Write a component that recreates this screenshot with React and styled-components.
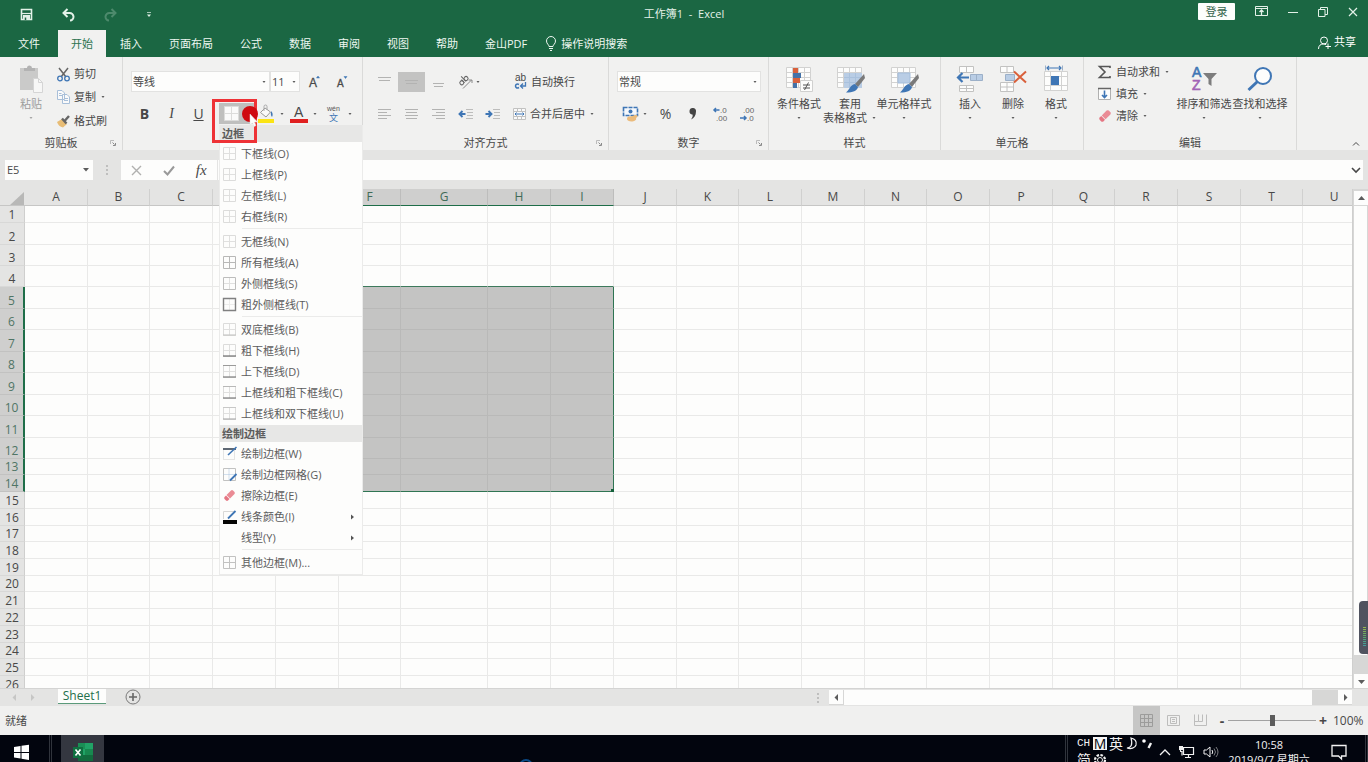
import React, { useState } from "react";
import styled, { createGlobalStyle, css } from "styled-components";

const GREEN = "#1b6743";
const RIBBON = "#f1f1f0";
const CHROME = "#e4e4e3";
const BLUE = "#3f76b5";

const GlobalStyle = createGlobalStyle`
  * {
    box-sizing: border-box;
  }
  body {
    margin: 0;
    overflow: hidden;
    font-family: "Open Sans", "Noto Sans CJK SC", sans-serif;
    font-size: 11px;
    line-height: 14px;
    color: #484848;
  }
  button, input, select {
    font: inherit;
    color: inherit;
    margin: 0;
    padding: 0;
    border: none;
    border-radius: 0;
    background: transparent;
    outline: none;
  }
  button {
    white-space: nowrap;
  }
  svg {
    display: block;
    flex: none;
    overflow: visible;
  }
  svg text {
    font-family: "Liberation Sans", "Noto Sans CJK SC", sans-serif;
  }
`;

const Window = styled.div`
  display: flex;
  flex-direction: column;
  height: 100vh;
`;

/* ---------- title bar and tabs ---------- */

const TitleBar = styled.header`
  display: grid;
  grid-template-columns: 1fr auto 1fr;
  align-items: center;
  height: 28px;
  background: ${GREEN};
  color: #e3f1e8;
`;

const QuickAccess = styled.div`
  display: flex;
  align-items: center;
  gap: 29px;
  padding-left: 20px;
`;

const Title = styled.div`
  white-space: pre;
`;

const WindowControls = styled.div`
  display: flex;
  justify-content: flex-end;
  align-items: center;
  gap: 20px;
  padding: 0 10px 5px 0;
`;

const LoginButton = styled.button`
  width: 37px;
  height: 17px;
  border-radius: 1px;
  background: #fcfefc;
  color: #35654c;
`;

const TabRow = styled.nav`
  display: flex;
  align-items: flex-end;
  gap: 1px;
  height: 29px;
  padding-left: 5px;
  background: ${GREEN};
  color: #e3f1e8;
`;

const Tab = styled.button`
  height: 27px;
  padding: 0 13px;
  background: ${(props) => (props.$active ? RIBBON : "transparent")};
  color: ${(props) => (props.$active ? "#2d7350" : "#eef7f1")};
`;

const FileTab = styled(Tab)`
  margin-right: 4px;
`;

const SearchTab = styled.button`
  display: flex;
  align-items: center;
  gap: 4px;
  height: 27px;
  margin-left: 4px;
  color: #eef7f1;
`;

const ShareButton = styled.button`
  display: flex;
  align-items: center;
  gap: 3px;
  height: 30px;
  margin-left: auto;
  padding-right: 12px;
  color: #ffffff;
`;

/* ---------- ribbon ---------- */

const Ribbon = styled.section`
  display: grid;
  grid-template-columns: 123px 240px 246px 160px 172px 143px 213px 1fr;
  height: 93px;
  background: ${RIBBON};
`;

const Group = styled.div`
  display: flex;
  flex-direction: column;
  min-width: 0;
  border-right: 1px solid #dadad9;
`;

const GroupBody = styled.div`
  display: flex;
  flex: 1;
  gap: ${(props) => props.$gap || 0}px;
  padding: ${(props) => props.$pad || "0"};
`;

const GroupFooter = styled.div`
  display: grid;
  grid-template-columns: 12px 1fr 12px;
  align-items: center;
  height: 15px;
  text-align: center;
`;

const RibbonEnd = styled.div`
  display: flex;
  justify-content: flex-end;
  align-items: flex-end;
  padding: 0 8px 4px 0;
`;

const Stack = styled.div`
  display: flex;
  flex-direction: column;
  gap: ${(props) => props.$gap || 0}px;
`;

const ToolRow = styled.div`
  display: flex;
  align-items: center;
  height: 21px;
`;

const Spacer = styled.i`
  width: ${(props) => props.$width}px;
`;

const TextTool = styled.button`
  display: flex;
  align-items: center;
  gap: 4px;
  height: ${(props) => props.$height || 22}px;
`;

const Tool = styled.button`
  display: flex;
  align-items: center;
  justify-content: center;
  gap: ${(props) => props.$gap || 0}px;
  width: ${(props) => props.$width || 27}px;
  height: 20px;
  background: ${(props) => (props.$pressed ? "#c3c3c2" : "transparent")};
`;

const Glyph = styled.span`
  font-size: 14px;
  font-weight: ${(props) => (props.$bold ? 700 : 400)};
  font-style: ${(props) => (props.$italic ? "italic" : "normal")};
  font-family: ${(props) => (props.$italic ? '"Liberation Serif", serif' : "inherit")};
  text-decoration: ${(props) => (props.$underline ? "underline" : "none")};
`;

const BigTool = styled.button`
  display: flex;
  flex-direction: column;
  align-items: center;
  width: ${(props) => props.$width}px;
  opacity: ${(props) => (props.$disabled ? 0.5 : 1)};

  > svg:first-child {
    margin-bottom: 4px;
  }
  > svg:last-child {
    margin-top: 5px;
  }
`;

const BigLine = styled.span`
  display: flex;
  align-items: center;
  gap: 4px;
  height: 14px;
`;

const Combo = styled.label`
  display: flex;
  align-items: center;
  width: ${(props) => props.$width}px;
  height: 21px;
  padding: 0 2px 0 1px;
  border: 1px solid #e2e2e1;
  background: #fdfdfc;

  select {
    flex: 1;
    min-width: 0;
    appearance: none;
  }
`;

const MenuAnchor = styled.div`
  position: relative;
  width: 38px;
`;

const BorderButton = styled.button`
  display: flex;
  align-items: center;
  width: 38px;
  height: 21px;
  padding-left: 5px;
  background: #bfbfbe;
`;

const Highlight = styled.div`
  position: absolute;
  top: -4px;
  left: -7px;
  width: 45px;
  height: 44px;
  border: 3px solid #ee3236;
  z-index: 4;
  pointer-events: none;
`;

const Pointer = styled.svg`
  position: absolute;
  top: 2px;
  left: 22px;
  z-index: 5;
  pointer-events: none;
`;

/* ---------- borders menu ---------- */

const Menu = styled.div`
  position: absolute;
  top: 22px;
  left: 0;
  width: 144px;
  z-index: 3;
  border: 1px solid #ebebea;
  border-top: none;
  background: #fdfdfc;
  color: #5c5c5c;
`;

const MenuHeading = styled.div`
  height: 17px;
  padding-left: 2px;
  background: #e7e7e6;
  font-weight: 700;
  line-height: 17px;
`;

const MenuList = styled.ul`
  list-style: none;
  margin: 0;
  padding: 1px 0;
`;

const MenuItem = styled.button`
  display: flex;
  align-items: center;
  gap: 5px;
  width: 100%;
  height: 21px;
  padding: 0 7px 0 3px;

  span {
    flex: 1;
    text-align: left;
  }
`;

const MenuDivider = styled.li`
  height: 4px;
  padding-top: 1px;

  &::after {
    content: "";
    display: block;
    height: 1px;
    margin-left: 22px;
    background: #ebebea;
  }
`;

/* ---------- formula bar ---------- */

const FormulaBar = styled.div`
  display: flex;
  height: 39px;
  padding: 10px 5px 9px;
  background: ${CHROME};
`;

const Box = styled.div`
  display: flex;
  align-items: center;
  height: 20px;
  background: #fdfdfc;
  ${(props) =>
    props.$name &&
    css`
      width: 88px;
      padding: 0 4px 0 2px;
    `}
  ${(props) =>
    props.$actions &&
    css`
      justify-content: space-around;
      width: 96px;
      margin-right: 1px;
    `}
  ${(props) =>
    props.$formula &&
    css`
      flex: 1;
      padding-right: 2px;
    `}

  input {
    flex: 1;
    min-width: 0;
  }
`;

const Dots = styled.div`
  display: flex;
  align-items: center;
  justify-content: center;
  width: 28px;
`;

const Fx = styled.span`
  font: italic 15px/18px "Liberation Serif", serif;
`;

/* ---------- sheet ---------- */

const SheetArea = styled.main`
  display: flex;
  flex: 1;
  min-height: 0;
  background: ${CHROME};
`;

const GridClip = styled.div`
  flex: 1;
  overflow: hidden;
  background: #fdfdfc;
`;

const Grid = styled.table`
  table-layout: fixed;
  width: max-content;
  border-collapse: separate;
  border-spacing: 0;
  font-size: 12px;
  line-height: 14px;
`;

const Row = styled.tr`
  height: ${(props) => props.$height}px;
`;

const ColHead = styled.th`
  padding: 0;
  height: 17px;
  overflow: hidden;
  font-weight: 400;
  line-height: 16px;
  vertical-align: bottom;
  background: ${(props) => (props.$on ? "#cfcfce" : CHROME)};
  color: ${(props) => (props.$on ? "#3f6b57" : "#484848")};
  border-right: 1px solid ${(props) => (props.$on ? "#bdbdbc" : "#d0d0cf")};
  border-bottom: 1px solid ${(props) => (props.$on ? "#1f6e49" : "#c6c6c5")};
`;

const RowHead = styled.th`
  padding: 0;
  font-weight: 400;
  text-align: center;
  vertical-align: bottom;
  background: ${(props) => (props.$on ? "#cfcfce" : CHROME)};
  color: ${(props) => (props.$on ? "#4f7565" : "#484848")};
  border-bottom: 1px solid ${(props) => (props.$on ? "#c2c2c1" : "#d8d8d7")};
  border-right: ${(props) => (props.$on ? "2px solid #1f6e49" : "1px solid #cfcfce")};
`;

const Corner = styled.th`
  padding: 0;
  background: ${CHROME};
  border-bottom: 1px solid #c6c6c5;

  svg {
    margin: 3px 1px 0 10px;
  }
`;

const Cell = styled.td`
  position: relative;
  padding: 0;
  border-right: 1px solid #e9e9e8;
  border-bottom: 1px solid #e9e9e8;
  ${(props) =>
    props.$on &&
    css`
      background: #c4c4c3;
      border-color: #b9b9b8;
    `}
  ${(props) => props.$above && "border-bottom-color: #3d7a5c;"}
  ${(props) => props.$bottom && "border-bottom-color: #2f7553;"}
  ${(props) => props.$right && "border-right-color: #2f7553;"}
`;

const FillHandle = styled.i`
  position: absolute;
  right: -1px;
  bottom: -1px;
  width: 3px;
  height: 3px;
  background: #14603a;
`;

const VScroll = styled.div`
  position: relative;
  display: flex;
  flex-direction: column;
  width: 16px;
  padding: 2px 1px 0;
  border-left: 1px solid #cfcfce;
  background: #d7d7d6;
`;

const ScrollButton = styled.button`
  display: flex;
  align-items: center;
  justify-content: center;
  width: 14px;
  height: 14px;
  background: #fdfdfc;
`;

const VThumb = styled.div`
  flex: 1;
  margin: 1px 0 19px;
  background: #fdfdfc;
`;

const Meter = styled.div`
  position: absolute;
  top: 412px;
  right: 0;
  width: 9px;
  height: 53px;
  padding: 26px 2px 0 4px;
  border-radius: 4px 0 0 4px;
  background: #50535f;

  div {
    height: 20px;
    background: repeating-linear-gradient(transparent 0 1px, #50535f 1px 2px), linear-gradient(#9bb84c, #58a86c, #3f9aa5);
  }
`;

const SheetBar = styled.div`
  display: flex;
  height: 18px;
  padding-left: 11px;
  border-top: 1px solid #d4d4d3;
  background: ${CHROME};
`;

const NavButtons = styled.div`
  display: flex;
  align-items: center;
  gap: 11px;
  width: 47px;
`;

const SheetTab = styled.button`
  height: 15px;
  width: 48px;
  border-bottom: 1px solid #5b9a7a;
  background: #fdfdfc;
  color: #236f4b;
  font-size: 12px;
  line-height: 14px;
`;

const AddSheet = styled.button`
  height: 16px;
  margin-left: 19px;
`;

const HScroll = styled.div`
  display: flex;
  width: 40%;
  height: 15px;
  margin: 1px 16px 0 auto;
  background: #d7d7d6;

  > svg {
    width: 20px;
    height: 15px;
    background: ${CHROME};
  }
`;

const HThumb = styled.div`
  flex: 1;
  margin: 0 26px 0 1px;
  background: #fdfdfc;
`;

const StatusBar = styled.footer`
  display: flex;
  align-items: center;
  height: 29px;
  padding: 0 4px 0 5px;
  background: #f0f0ef;
`;

const ViewButtons = styled.div`
  display: flex;
  height: 100%;
  margin-left: auto;
`;

const ViewButton = styled.button`
  display: flex;
  align-items: center;
  justify-content: center;
  width: 27px;
  background: ${(props) => (props.$active ? "#c6c6c5" : "transparent")};
`;

const ZoomControl = styled.div`
  display: flex;
  align-items: center;
  margin-left: 3px;

  button {
    width: 10px;
    font-size: 14px;
    font-weight: 700;
  }
  input {
    appearance: none;
    width: 88px;
    height: 11px;
    margin: 0 2px 0 1px;
    background: linear-gradient(#a2a2a2, #a2a2a2) center / 100% 1px no-repeat;
  }
  input::-webkit-slider-thumb {
    appearance: none;
    width: 5px;
    height: 11px;
    background: #5c5c5c;
  }
`;

const ZoomText = styled.span`
  width: 31px;
  margin-left: 5px;
  font-size: 12px;
`;

/* ---------- desktop taskbar ---------- */

const Taskbar = styled.div`
  display: flex;
  height: 27px;
  overflow: hidden;
  background: #02050e;
  color: #f2f2f2;
`;

const StartButton = styled.button`
  width: 49px;
  height: 34px;
  padding: 0 14px;
`;

const TaskDivider = styled.i`
  width: 3px;
  border: solid #30343c;
  border-width: 0 1px;
`;

const TaskButton = styled.button`
  width: 43px;
  height: 34px;
  margin-left: 9px;
  padding-left: 11px;
  background: #343740;
`;

const TaskCenter = styled.div`
  display: flex;
  flex: 1;
  align-items: flex-end;
  padding-left: 414px;
`;

const Ime = styled.div`
  display: flex;
  flex-wrap: wrap;
  align-items: center;
  align-content: flex-start;
  gap: 1px 2px;
  width: 78px;
  height: 40px;
  margin-left: 9px;
  padding-top: 1px;
  font-size: 14px;
  line-height: 15px;

  small {
    width: 14px;
    font: 11px/15px "Liberation Mono", monospace;
  }
  b {
    width: 14px;
    height: 13px;
    background: #f5f5f5;
    color: #02050e;
    font-weight: 400;
    line-height: 13px;
    text-align: center;
  }
`;

const Tray = styled.div`
  display: flex;
  align-items: center;
  gap: 8px;
  height: 34px;
  margin-left: 4px;
`;

const Clock = styled.div`
  width: 100px;
  padding-top: 2px;
  line-height: 15px;
  text-align: center;
`;

const NoticeButton = styled.button`
  height: 34px;
  margin: 0 18px 0 12px;
`;

/* ---------- icons ---------- */

const Icon = ({ w = 14, h = 14, children, ...rest }) => (
  <svg width={w} height={h} viewBox={`0 0 ${w} ${h}`} fill="none" stroke="currentColor" aria-hidden="true" {...rest}>
    {children}
  </svg>
);

const Arrow = ({ size = 3 }) => (
  <Icon w={6} h={4}>
    <path d={size > 3 ? "M0 0h6L3 3.5z" : "M1.5 1h3L3 3z"} fill="#5c5c5c" stroke="none" />
  </Icon>
);

const Launcher = () => (
  <Icon w={6} h={6}>
    <path d="M.5 4V.5H4" stroke="#bbb" />
    <path d="M2.5 2.5l2 2M5.5 3v2.5H3" stroke="#8a8a8a" />
  </Icon>
);

const Triangle = ({ dir, color = "#5c5c5c" }) => {
  const shapes = {
    up: "M0 5L3.500 1 7 5z",
    down: "M0 2h7L3.500 6z",
    left: "M5 0v7L1.500 3.500z",
    right: "M2 0v7l3.500-3.500z",
  };
  return (
    <Icon w={7} h={7}>
      <path d={shapes[dir]} fill={color} stroke="none" />
    </Icon>
  );
};

const SaveIcon = () => (
  <Icon w={13} h={13}>
    <path d="M1.500 1.500h10v10h-10z" strokeWidth="1.600" />
    <path d="M3 7h7v5H3z" fill="currentColor" stroke="none" />
    <path d="M2 5.500h9" strokeWidth="1.200" />
    <path d="M5.500 9.500v2.500" stroke={GREEN} strokeWidth="1.500" />
  </Icon>
);

const UndoIcon = ({ flip }) => (
  <Icon w={13} h={13} opacity={flip ? 0.25 : 1}>
    <g transform={flip ? "translate(13 0) scale(-1 1)" : undefined}>
      <path d="M2 5h5.500a3.500 3.500 0 0 1 .5 7.500" strokeWidth="2" />
      <path d="M5.500 1L1.500 5l4 4" strokeWidth="2" />
    </g>
  </Icon>
);

const CustomizeIcon = () => (
  <Icon w={6} h={6}>
    <path d="M1 1.500h4" opacity=".7" />
    <path d="M1 3.500h4L3 6z" fill="currentColor" stroke="none" />
  </Icon>
);

const RibbonModeIcon = () => (
  <Icon w={13} h={11}>
    <path d="M.5.500h12v9H.5zM.5 2.500h12" />
    <path d="M6.500 9V4.500M4.500 6l2-2 2 2" strokeWidth="1.300" />
  </Icon>
);

const MinIcon = () => (
  <Icon w={10} h={10}>
    <path d="M0 5.500h10" />
  </Icon>
);

const RestoreIcon = () => (
  <Icon w={10} h={10}>
    <path d="M.5 2.500h6.500V9.500H.5zM2.500 2.500V.500h7v7H7" />
  </Icon>
);

const CloseIcon = () => (
  <Icon w={10} h={10}>
    <path d="M1 1l8 8M9 1L1 9" strokeWidth="1.200" />
  </Icon>
);

const BulbIcon = () => (
  <Icon w={12} h={15}>
    <path d="M4 10.500C4 8.500 1.500 8 1.500 5a4.500 4.500 0 0 1 9 0c0 3-2.500 3.500-2.500 5.500zM4 12.500h4M5 14.500h2" />
  </Icon>
);

const ShareIcon = () => (
  <Icon w={13} h={13}>
    <circle cx="6" cy="4.500" r="3.500" />
    <path d="M.5 13c0-3.500 2-5 5-5 1.200 0 2 .3 2.700.8M10 7.500v5.500M7.500 10.500h5.500" />
  </Icon>
);

const PasteIcon = () => (
  <Icon w={26} h={28}>
    <path d="M2 3h18v22H2z" fill="#a5a5a4" stroke="none" />
    <path d="M6 3h3a2.500 2.500 0 0 1 5 0h3v3H6z" fill="#777" stroke="none" />
    <path d="M15.500 13.500h5l4 4v10h-9z" fill="#fdfdfc" stroke="#bbb" />
    <path d="M20.500 13.500v4h4" stroke="#bbb" />
  </Icon>
);

const CutIcon = () => (
  <Icon w={13} h={15}>
    <path d="M2 1l7 9M11 1L4 10" stroke="#666" strokeWidth="1.500" />
    <circle cx="3" cy="11.500" r="2.300" stroke={BLUE} strokeWidth="1.300" />
    <circle cx="10" cy="11.500" r="2.300" stroke={BLUE} strokeWidth="1.300" />
  </Icon>
);

const CopyIcon = () => (
  <Icon w={13} h={14}>
    <path d="M.5.500H5L7.500 3v6.500h-7zM5.500 4.500H10l2.500 2.500v6.500h-7z" fill="#fafafa" stroke="#a8bfd9" />
    <path d="M2 3.500h2.500M2 5.500h3M7 8.500h4M7 10.500h4" stroke="#a8bfd9" />
  </Icon>
);

const BrushIcon = () => (
  <Icon w={13} h={13}>
    <path d="M0 7l5-3 5 5-4 3.500C3 12 1 10 0 7z" fill="#e8bd76" stroke="none" />
    <path d="M5 3.500l4.500 5M8 5.500L12 1" stroke="#666" strokeWidth="2.400" />
  </Icon>
);

const Lines = ({ rows, w = 13 }) => (
  <Icon w={w} h={14}>
    {rows.map(([x, y, len]) => (
      <path key={y} d={`M${x} ${y}.5h${len}`} stroke="#b3b3b2" />
    ))}
  </Icon>
);

const OrientIcon = () => (
  <Icon w={14} h={14}>
    <g transform="rotate(-45 6 6)" stroke="#666">
      <circle cx="2.500" cy="5" r="2" />
      <path d="M4.500 2.500v4.500M6.500 0v7" />
      <circle cx="8.500" cy="5" r="2" />
    </g>
    <path d="M4 13.500L12.500 5M9.500 5h3.500v3" stroke="#888" />
  </Icon>
);

const WrapIcon = () => (
  <Icon w={13} h={16}>
    <text x="1" y="7" fontSize="10" fill="#484848" stroke="none">ab</text>
    <path d="M5 10.500C2.500 9 1.500 11 1.500 12s1 3 3.500 1.500" stroke={BLUE} strokeWidth="1.500" />
    <path d="M11.500 8v4H7M9 9.500L6.500 12 9 14.500" stroke={BLUE} strokeWidth="1.300" />
  </Icon>
);

const IndentIcon = ({ right }) => (
  <Icon w={16} h={14}>
    <path d="M8 2.500h7M9 5.500h6M9 8.500h6M8 11.500h7" stroke="#bdbdbc" />
    <g transform={right ? "translate(8 0) scale(-1 1)" : undefined}>
      <path d="M7.500 7H1.500M4.500 4L1.500 7l3 3" stroke={BLUE} strokeWidth="1.900" />
    </g>
  </Icon>
);

const MergeIcon = () => (
  <Icon w={13} h={14}>
    <path d="M.5 1.500h12v11H.5zM.5 4.500h12M.5 9.500h12M4.500 1.500v3M8.500 1.500v3M4.500 9.500v3M8.500 9.500v3" fill="#fafafa" stroke="#c2c2c1" />
    <path d="M2 7h9M3.500 5.500L2 7l1.500 1.500M9.500 5.500L11 7 9.500 8.500" stroke={BLUE} />
  </Icon>
);

const GrowIcon = ({ shrink }) => (
  <Icon w={14} h={14}>
    <text x="1" y="12" fontSize={shrink ? 10 : 12} fill="#4a4a4a" stroke="#4a4a4a" strokeWidth=".3">A</text>
    <path d={shrink ? "M8 1.500h3l-1.500 2z" : "M8.500 3h3L10 1z"} fill={BLUE} stroke={BLUE} strokeWidth=".5" />
  </Icon>
);

const TableGlyph = () => (
  <Icon w={15} h={15}>
    <path d="M.5.500h14v14H.5zM7.500.500v14M.5 7.500h14" fill="#fafafa" stroke="#dcdcdb" />
  </Icon>
);

const BucketIcon = () => (
  <Icon w={16} h={20}>
    <path d="M2.500 8.500L7 4l5.500 4L8 13z" fill="#fafafa" stroke="#999" />
    <path d="M6 7V2.500a1.500 1.500 0 0 1 3 0V6" stroke="#aaa" />
    <path d="M13 7c2 2 2 4 1 6-1-1-1.500-3-1-6z" fill={BLUE} stroke="none" />
    <path d="M0 15h16v4H0z" fill="#fbe414" stroke="none" />
  </Icon>
);

const FontColorIcon = () => (
  <Icon w={18} h={20}>
    <text x="4" y="13" fontSize="14" fill="#484848" stroke="none">A</text>
    <path d="M0 15h18v4H0z" fill="#e02020" stroke="none" />
  </Icon>
);

const PhoneticIcon = () => (
  <Icon w={14} h={16}>
    <text x="0" y="5" fontSize="7" fill="#555" stroke="none">wén</text>
    <text x="2" y="15" fontSize="9" fill={BLUE} stroke="none">文</text>
  </Icon>
);

const MoneyIcon = () => (
  <Icon w={17} h={16}>
    <path d="M1.500 1.500h14v8h-14z" fill="#f5f8fc" stroke={BLUE} strokeWidth="1.600" strokeDasharray="4 1" />
    <circle cx="8.500" cy="5.500" r="2" fill={BLUE} stroke="none" />
    <path d="M5 13c0-2 1-2.500 3-2.500s4-1.500 6-1.500 2 2 0 3c1 2-2 3.500-4.500 3.500S5 14.500 5 13z" fill="#ebbb7c" stroke="none" />
  </Icon>
);

const DecimalIcon = ({ more }) => (
  <Icon w={14} h={16}>
    <text x={more ? 7 : 3} y="7" fontSize="8" fill="#666" stroke="none">{more ? ".0" : ".00"}</text>
    <text x={more ? 3 : 7} y="15" fontSize="8" fill="#666" stroke="none">{more ? ".00" : ".0"}</text>
    <path d={more ? "M6.500 4H1M3 2L1 4l2 2" : "M0 12h6M4 10l2 2-2 2"} stroke={BLUE} strokeWidth="1.500" />
  </Icon>
);

const CellGrid = ({ children }) => (
  <Icon w={29} h={28}>
    <path d="M1.500 2.500h24v20h-24zM1.500 7.500h24M1.500 12.500h24M1.500 17.500h24M7.500 2.500v20M13.500 2.500v20M19.500 2.500v20" fill="#fdfdfc" stroke="#d2d2d1" />
    {children}
  </Icon>
);

const ConditionalIcon = () => (
  <CellGrid>
    <path d="M8 3h5v5H8zM8 13h7v5H8z" fill="#d9603b" stroke="none" />
    <path d="M8 8h8v5H8zM8 18h4v5H8z" fill="#4472a8" stroke="none" />
    <path d="M15.500 15.500h12v11h-12z" fill="#fdfdfc" stroke="#d0d0cf" />
    <path d="M18 20h7M18 23h7M23.500 17.500l-4 7.500" stroke="#555" />
  </CellGrid>
);

const Paintbrush = () => (
  <>
    <path d="M28 9l1 4-7 9-3-3z" fill="#7a7a7a" stroke="none" />
    <path d="M19 19l3 3c-1 4-5 5.500-12 5.500 3-2 4-7.500 9-8.500z" fill={BLUE} stroke="none" />
  </>
);

const TableStyleIcon = () => (
  <CellGrid>
    <path d="M8 8h18v15H8z" fill="#b9cde5" stroke="none" />
    <path d="M8 12.500h18M8 17.500h18M13.500 8v15M19.500 8v15" stroke="#a9c1dd" />
    <Paintbrush />
  </CellGrid>
);

const CellStyleIcon = () => (
  <CellGrid>
    <path d="M8 8h12v10H8z" fill="#b9cde5" stroke="#a3bddb" />
    <Paintbrush />
  </CellGrid>
);

const InsertIcon = () => (
  <Icon w={28} h={28}>
    <path d="M3.500 1.500h14v6h-14zM10.500 1.500v6M3.500 20.500h14v6h-14zM10.500 20.500v6M3.500 23.500h14" fill="#fdfdfc" stroke="#c2c2c1" />
    <path d="M14.500 9.500h12v6h-12zM20.500 9.500v6" fill="#b9cde5" stroke="#9cb0c8" />
    <path d="M13 12.500H2M6.500 8L2 12.500 6.500 17" stroke={BLUE} strokeWidth="2.200" />
  </Icon>
);

const DeleteIcon = () => (
  <Icon w={28} h={28}>
    <path d="M1.500 1.500h13v6h-13zM8 1.500v6M1.500 17.500h13v9h-13zM8 17.500v9M1.500 22h13" fill="#fdfdfc" stroke="#c2c2c1" />
    <path d="M6.500 9.500h9v6h-9z" fill="#b9cde5" stroke="#9cb0c8" />
    <path d="M15 6.500l12 11M27 6.500l-12 11" stroke="#d9603b" strokeWidth="2" />
  </Icon>
);

const FormatIcon = () => (
  <Icon w={26} h={28}>
    <path d="M2.500.500v5M19.500.500v5" stroke="#9cb0c8" />
    <path d="M4 3h14M6 1L4 3l2 2M16 1l2 2-2 2" stroke={BLUE} strokeWidth="1.200" />
    <path d="M1.500 6.500h23v19h-23zM1.500 11.500h23M1.500 20.500h23M7.500 6.500v19M18.500 6.500v19" fill="#fdfdfc" stroke="#d2d2d1" />
    <path d="M8 11h8v9H8z" fill={BLUE} stroke="none" />
  </Icon>
);

const SumIcon = () => (
  <Icon w={14} h={14}>
    <path d="M12 3V1.500H1.500L7 7l-5.500 5.500H12V11" stroke="#555" strokeWidth="1.600" />
  </Icon>
);

const FillIcon = () => (
  <Icon w={14} h={14}>
    <path d="M.5 1.500h12v11H.5z" fill="#fdfdfc" stroke="#b0b0b0" />
    <path d="M0 1.500h13" stroke="#666" strokeWidth="1.500" />
    <path d="M6.500 3.500V10.500M4 8l2.500 2.500L9 8" stroke={BLUE} strokeWidth="1.600" />
  </Icon>
);

const EraserIcon = ({ size = 13 }) => (
  <svg width={size} height={size} viewBox="0 0 13 13" aria-hidden="true">
    <path d="M8 1.500q1-.8 2 0l1.500 1.500q.8 1 0 2L7 9.500 3.500 6z" fill="#ea8b95" />
    <path d="M3 6.500L6.500 10 5 11.500q-1 .8-2 0L1.500 10q-.8-1 0-2z" fill="#e57683" />
  </svg>
);

const SortIcon = () => (
  <Icon w={26} h={28}>
    <text x="1" y="12" fontSize="14" fill={BLUE} stroke={BLUE} strokeWidth=".6">A</text>
    <text x="1" y="25" fontSize="14" fill="#a163b5" stroke="#a163b5" strokeWidth=".6">Z</text>
    <path d="M12 8h14l-5.500 6v7l-3-2v-5z" fill="#7d7d7d" stroke="none" />
  </Icon>
);

const FindIcon = () => (
  <Icon w={26} h={28}>
    <circle cx="16" cy="11" r="8" fill="#fdfdfc" stroke={BLUE} strokeWidth="2" />
    <path d="M10.500 16.500L1.500 25" stroke={BLUE} strokeWidth="3" />
  </Icon>
);

const EdgeIcon = ({ inner = "#e0e0df", box = "#dcdcdb", top, bottom, thick }) => (
  <Icon w={13} h={13}>
    <path d="M6.500 1v11M1 6.500h11" stroke={inner} />
    <path d="M.5.500h12v12H.5z" stroke={box} strokeWidth={thick ? 1.4 : 1} />
    {top && <path d="M0 .5h13" stroke={top} />}
    {bottom && <path d="M0 12h13" stroke={bottom} strokeWidth="1.200" />}
  </Icon>
);

const DrawIcon = () => (
  <Icon w={13} h={13}>
    <path d="M.5 1.500h11v11H.5z" stroke="#ccc" strokeDasharray="1 1" />
    <path d="M0 2h13" stroke="#5f6874" strokeWidth="2" />
    <path d="M13.500 0L5 8" stroke={BLUE} strokeWidth="1.600" />
  </Icon>
);

const DrawGridIcon = () => (
  <Icon w={13} h={13}>
    <path d="M.5.500h12v12H.5z" stroke="#c2c2c1" />
    <path d="M6 .5v12M.5 6.500h12" stroke="#a9c2df" strokeDasharray="1 1" />
    <path d="M13.500 6L7 12.500" stroke={BLUE} strokeWidth="1.800" />
  </Icon>
);

const LineColorIcon = () => (
  <Icon w={13} h={14}>
    <path d="M.5 9V1.500h12" stroke="#d8d8d7" />
    <path d="M12.500 1L5 8.500" stroke={BLUE} strokeWidth="1.800" />
    <path d="M0 10h14v4H0z" fill="#050505" stroke="none" />
  </Icon>
);

/* ---------- data ---------- */

const TABS = ["开始", "插入", "页面布局", "公式", "数据", "审阅", "视图", "帮助", "金山PDF"];

const BORDER_GROUPS = [
  [
    ["下框线(O)", <EdgeIcon />],
    ["上框线(P)", <EdgeIcon />],
    ["左框线(L)", <EdgeIcon />],
    ["右框线(R)", <EdgeIcon />],
  ],
  [
    ["无框线(N)", <EdgeIcon />],
    ["所有框线(A)", <EdgeIcon inner="#b8b8b7" box="#b8b8b7" />],
    ["外侧框线(S)", <EdgeIcon box="#bdbdbc" />],
    ["粗外侧框线(T)", <EdgeIcon inner="#ececeb" box="#808080" thick />],
  ],
  [
    ["双底框线(B)", <EdgeIcon bottom="#c8c8c7" />],
    ["粗下框线(H)", <EdgeIcon bottom="#6e6e6e" />],
    ["上下框线(D)", <EdgeIcon top="#9a9a99" bottom="#7c7c7c" />],
    ["上框线和粗下框线(C)", <EdgeIcon top="#b8b8b7" bottom="#7c7c7c" />],
    ["上框线和双下框线(U)", <EdgeIcon top="#c8c8c7" bottom="#b0b0af" />],
  ],
];

const DRAW_GROUPS = [
  [
    ["绘制边框(W)", <DrawIcon />],
    ["绘制边框网格(G)", <DrawGridIcon />],
    ["擦除边框(E)", <EraserIcon />],
    ["线条颜色(I)", <LineColorIcon />, true],
    ["线型(Y)", <Icon w={13} h={13} />, true],
  ],
  [["其他边框(M)...", <EdgeIcon inner="#c2c2c1" box="#c2c2c1" />]],
];

const COLUMNS = [63, 62, 63, 63, 63, 62, 87, 63, 63, 63, 62, 63, 63, 62, 63, 63, 62, 63, 63, 62, 63].map(
  (width, i) => ({ width, name: String.fromCharCode(65 + i), on: i >= 4 && i <= 8 })
);

const ROW_HEIGHTS = [
  17, 22, 21, 21, 22, 21, 22, 21, 22, 21, 22, 21, 16, 17, 17, 17, 16, 17, 17, 16, 17, 17, 17, 16, 17, 17,
];

const inRows = (r) => r >= 5 && r <= 14;

/* ---------- parts ---------- */

function MenuSection({ groups }) {
  return (
    <MenuList role="menu">
      {groups.map((items, g) => (
        <React.Fragment key={g}>
          {g > 0 && <MenuDivider role="separator" />}
          {items.map(([label, icon, more]) => (
            <li key={label}>
              <MenuItem role="menuitem">
                {icon}
                <span>{label}</span>
                {more && (
                  <Icon w={4} h={6}>
                    <path d="M0 .5v5L3 3z" fill="#555" stroke="none" />
                  </Icon>
                )}
              </MenuItem>
            </li>
          ))}
        </React.Fragment>
      ))}
    </MenuList>
  );
}

function RibbonGroup({ label, launcher, gap, pad, children }) {
  return (
    <Group>
      <GroupBody $gap={gap} $pad={pad}>
        {children}
      </GroupBody>
      <GroupFooter>
        <i />
        <span>{label}</span>
        {launcher && <Launcher />}
      </GroupFooter>
    </Group>
  );
}

function Select({ label, value, width }) {
  return (
    <Combo $width={width}>
      <select aria-label={label} defaultValue={value}>
        <option>{value}</option>
      </select>
      <Arrow />
    </Combo>
  );
}

function BigButton({ icon, lines, width, disabled, inlineArrow }) {
  return (
    <BigTool $width={width} $disabled={disabled}>
      {icon}
      {lines.map((line, i) => (
        <BigLine key={line}>
          {line}
          {inlineArrow && i === lines.length - 1 && <Arrow />}
        </BigLine>
      ))}
      {!inlineArrow && <Arrow />}
    </BigTool>
  );
}

function BordersDropdown() {
  const [open, setOpen] = useState(true);
  return (
    <MenuAnchor>
      <BorderButton aria-label="边框" aria-expanded={open} onClick={() => setOpen(!open)}>
        <TableGlyph />
      </BorderButton>
      {open && (
        <Menu>
          <MenuHeading>边框</MenuHeading>
          <MenuSection groups={BORDER_GROUPS} />
          <MenuHeading>绘制边框</MenuHeading>
          <MenuSection groups={DRAW_GROUPS} />
        </Menu>
      )}
      <Highlight />
      <Pointer width="20" height="24" viewBox="0 0 20 24" aria-hidden="true">
        <circle cx="9" cy="9" r="8" fill="#cf0a10" />
        <path d="M9 9v11l2.500-2 1.500 3.500 2-1-1.500-3.500h3z" fill="#fdfdfc" stroke="#ddd" strokeWidth=".5" />
      </Pointer>
    </MenuAnchor>
  );
}

function RibbonPanel() {
  return (
    <Ribbon>
      <RibbonGroup label="剪贴板" launcher gap={11} pad="8px 0 0 16px">
        <BigButton icon={<PasteIcon />} lines={["粘贴"]} width={30} disabled />
        <Stack $gap={1}>
          <TextTool $height={18}>
            <CutIcon />
            剪切
          </TextTool>
          <TextTool $height={25}>
            <CopyIcon />
            复制
            <Arrow />
          </TextTool>
          <TextTool>
            <BrushIcon />
            格式刷
          </TextTool>
        </Stack>
      </RibbonGroup>

      <RibbonGroup label="字体" pad="14px 0 0 8px">
        <Stack $gap={11}>
          <ToolRow>
            <Select label="字体" value="等线" width={139} />
            <Select label="字号" value="11" width={30} />
            <Tool $width={29} aria-label="增大字号">
              <GrowIcon />
            </Tool>
            <Tool aria-label="减小字号">
              <GrowIcon shrink />
            </Tool>
          </ToolRow>
          <ToolRow>
            <Tool aria-label="加粗">
              <Glyph $bold>B</Glyph>
            </Tool>
            <Tool aria-label="倾斜">
              <Glyph $italic>I</Glyph>
            </Tool>
            <Tool aria-label="下划线">
              <Glyph $underline>U</Glyph>
            </Tool>
            <Spacer $width={7} />
            <BordersDropdown />
            <Tool $width={28} $gap={5} aria-label="填充颜色">
              <BucketIcon />
              <Arrow />
            </Tool>
            <Tool $width={38} $gap={4} aria-label="字体颜色">
              <FontColorIcon />
              <Arrow />
            </Tool>
            <Tool $width={33} $gap={6} aria-label="拼音">
              <PhoneticIcon />
              <Arrow />
            </Tool>
          </ToolRow>
        </Stack>
      </RibbonGroup>

      <RibbonGroup label="对齐方式" launcher pad="14px 0 0 8px">
        <Stack $gap={11}>
          <ToolRow>
            <Tool aria-label="顶端对齐">
              <Lines rows={[[0, 2, 13], [1, 5, 11]]} />
            </Tool>
            <Tool $pressed aria-label="垂直居中">
              <Lines rows={[[0, 5, 13], [1, 8, 11]]} />
            </Tool>
            <Tool aria-label="底端对齐">
              <Lines rows={[[1, 8, 11], [2, 11, 9]]} />
            </Tool>
            <Tool $width={36} $gap={2} aria-label="方向">
              <OrientIcon />
              <Arrow />
            </Tool>
            <Spacer $width={26} />
            <TextTool>
              <WrapIcon />
              自动换行
            </TextTool>
          </ToolRow>
          <ToolRow>
            <Tool aria-label="左对齐">
              <Lines rows={[[0, 2, 13], [0, 5, 9], [0, 8, 13], [0, 11, 9]]} />
            </Tool>
            <Tool aria-label="居中">
              <Lines rows={[[0, 2, 13], [1, 5, 11], [0, 8, 13], [1, 11, 11]]} />
            </Tool>
            <Tool aria-label="右对齐">
              <Lines rows={[[0, 2, 13], [4, 5, 9], [0, 8, 13], [4, 11, 9]]} />
            </Tool>
            <Tool aria-label="减少缩进量">
              <IndentIcon />
            </Tool>
            <Tool aria-label="增加缩进量">
              <IndentIcon right />
            </Tool>
            <Spacer $width={7} />
            <TextTool>
              <MergeIcon />
              合并后居中
              <Arrow />
            </TextTool>
          </ToolRow>
        </Stack>
      </RibbonGroup>

      <RibbonGroup label="数字" launcher pad="14px 0 0 8px">
        <Stack $gap={11}>
          <ToolRow>
            <Select label="数字格式" value="常规" width={144} />
          </ToolRow>
          <ToolRow>
            <Tool $width={35} $gap={3} aria-label="会计数字格式">
              <MoneyIcon />
              <Arrow />
            </Tool>
            <Tool aria-label="百分比样式">
              <Glyph>%</Glyph>
            </Tool>
            <Tool aria-label="千位分隔样式">
              <Icon w={8} h={14}>
                <path d="M4 1a3 3 0 0 1 3 3.500c0 4-2 6.500-5 8 1.500-2 2-3.500 1.500-5A3 3 0 1 1 4 1z" fill="#444" stroke="none" />
              </Icon>
            </Tool>
            <Tool aria-label="增加小数位数">
              <DecimalIcon more />
            </Tool>
            <Tool aria-label="减少小数位数">
              <DecimalIcon />
            </Tool>
          </ToolRow>
        </Stack>
      </RibbonGroup>

      <RibbonGroup label="样式" pad="8px 0 0 4px">
        <BigButton icon={<ConditionalIcon />} lines={["条件格式"]} width={52} />
        <BigButton icon={<TableStyleIcon />} lines={["套用", "表格格式"]} width={50} inlineArrow />
        <BigButton icon={<CellStyleIcon />} lines={["单元格样式"]} width={58} />
      </RibbonGroup>

      <RibbonGroup label="单元格" pad="8px 0 0 8px">
        <BigButton icon={<InsertIcon />} lines={["插入"]} width={42} />
        <BigButton icon={<DeleteIcon />} lines={["删除"]} width={44} />
        <BigButton icon={<FormatIcon />} lines={["格式"]} width={42} />
      </RibbonGroup>

      <RibbonGroup label="编辑" pad="4px 0 0 14px">
        <Stack>
          <TextTool>
            <SumIcon />
            自动求和
            <Arrow />
          </TextTool>
          <TextTool>
            <FillIcon />
            填充
            <Arrow />
          </TextTool>
          <TextTool>
            <EraserIcon size={14} />
            清除
            <Arrow />
          </TextTool>
        </Stack>
        <GroupBody $pad="4px 0 0 6px">
          <BigButton icon={<SortIcon />} lines={["排序和筛选"]} width={56} />
          <BigButton icon={<FindIcon />} lines={["查找和选择"]} width={56} />
        </GroupBody>
      </RibbonGroup>

      <RibbonEnd>
        <button aria-label="折叠功能区">
          <Icon w={8} h={5}>
            <path d="M1 4.500l3-3 3 3" />
          </Icon>
        </button>
      </RibbonEnd>
    </Ribbon>
  );
}

function Sheet() {
  return (
    <Grid>
      <colgroup>
        <col width={25} />
        {COLUMNS.map((c) => (
          <col key={c.name} width={c.width} />
        ))}
      </colgroup>
      <thead>
        <tr>
          <Corner>
            <Icon w={14} h={13}>
              <path d="M14 0v13H0z" fill="#b8b8b7" stroke="none" />
            </Icon>
          </Corner>
          {COLUMNS.map((c) => (
            <ColHead key={c.name} $on={c.on}>
              {c.name}
            </ColHead>
          ))}
        </tr>
      </thead>
      <tbody>
        {ROW_HEIGHTS.map((height, i) => {
          const r = i + 1;
          return (
            <Row key={r} $height={height}>
              <RowHead $on={inRows(r)}>{r}</RowHead>
              {COLUMNS.map((c) => (
                <Cell
                  key={c.name}
                  $on={c.on && inRows(r)}
                  $above={c.on && r === 4}
                  $bottom={c.on && r === 14}
                  $right={c.name === "I" && inRows(r)}
                >
                  {c.name === "I" && r === 14 && <FillHandle />}
                </Cell>
              ))}
            </Row>
          );
        })}
      </tbody>
    </Grid>
  );
}

function DesktopTaskbar() {
  return (
    <Taskbar>
      <StartButton aria-label="开始菜单">
        <Icon w={16} h={16}>
          <path d="M0 3l6.500-1v6H0zM7.500 1.800L15 .700V8H7.500zM0 9h6.500v5.500L0 13.500zM7.500 9H15v7l-7.500-1.200z" fill="#fff" stroke="none" />
        </Icon>
      </StartButton>
      <TaskDivider />
      <TaskButton aria-label="Excel">
        <Icon w={22} h={20}>
          <path d="M6 1h15v18H6z" fill="#21a366" stroke="none" />
          <path d="M6 1h7v6H6z" fill="#1a8f55" stroke="none" />
          <path d="M13 7h8v6h-8z" fill="#18884f" stroke="none" />
          <path d="M6 13h15v6H6z" fill="#126b3d" stroke="none" />
          <path d="M1 5h10v11H1z" fill="#0f7040" stroke="none" />
          <path d="M3.500 7.500l5 6M8.500 7.500l-5 6" stroke="#fff" strokeWidth="1.600" />
        </Icon>
      </TaskButton>
      <TaskCenter>
        <Icon w={16} h={4}>
          <circle cx="8" cy="8" r="6" stroke="#0b4a86" strokeWidth="2" />
        </Icon>
      </TaskCenter>
      <TaskDivider />
      <Ime>
        <small>CH</small>
        <b>M</b>
        <span>英</span>
        <Icon w={14} h={14}>
          <path d="M6 1c4 1 6 3 5 7-1 3-5 4.500-9 3 4-.5 6-3 4-10z" strokeWidth="1.200" />
        </Icon>
        <Icon w={12} h={14}>
          <circle cx="3" cy="4" r="1.800" fill="#fff" stroke="none" />
          <path d="M10 6l-2.500 5" strokeWidth="2.400" />
        </Icon>
        <span>简</span>
        <Icon w={14} h={14}>
          <circle cx="7" cy="7" r="5" strokeWidth="2.200" strokeDasharray="2.500 1.400" />
          <circle cx="7" cy="7" r="2.500" />
        </Icon>
      </Ime>
      <Tray>
        <Icon w={12} h={8}>
          <path d="M1 7l5-5 5 5" strokeWidth="1.300" />
        </Icon>
        <Icon w={16} h={14}>
          <path d="M4.500 2.500h10v7h-10zM6 12.500h6M9.500 9.500v3M1.500 1v5M1 6.500h2v4" strokeWidth="1.200" />
          <path d="M0 1h4v4H0z" fill="#eee" stroke="none" />
        </Icon>
        <Icon w={16} h={14}>
          <path d="M1 5h2.500L7 2v10L3.500 9H1zM9 5q1.500 2 0 4" />
          <path d="M11 3.500q3 3.500 0 7M13 2q4 5 0 10" opacity=".5" />
        </Icon>
      </Tray>
      <Clock>
        <div>10:58</div>
        <div>2019/9/7 星期六</div>
      </Clock>
      <NoticeButton aria-label="通知">
        <Icon w={16} h={16}>
          <path d="M1 1.500h14v10.500h-4.500v3l-3-3H1z" strokeWidth="1.300" />
        </Icon>
      </NoticeButton>
      <TaskDivider />
    </Taskbar>
  );
}

export default function App() {
  const [tab, setTab] = useState("开始");
  const [zoom, setZoom] = useState(100);

  return (
    <Window>
      <GlobalStyle />
      <TitleBar>
        <QuickAccess>
          <button aria-label="保存">
            <SaveIcon />
          </button>
          <button aria-label="撤消">
            <UndoIcon />
          </button>
          <button aria-label="恢复">
            <UndoIcon flip />
          </button>
          <button aria-label="自定义快速访问工具栏">
            <CustomizeIcon />
          </button>
        </QuickAccess>
        <Title>工作簿1  -  Excel</Title>
        <WindowControls>
          <LoginButton>登录</LoginButton>
          <button aria-label="功能区显示选项">
            <RibbonModeIcon />
          </button>
          <button aria-label="最小化">
            <MinIcon />
          </button>
          <button aria-label="还原">
            <RestoreIcon />
          </button>
          <button aria-label="关闭">
            <CloseIcon />
          </button>
        </WindowControls>
      </TitleBar>

      <TabRow>
        <FileTab>文件</FileTab>
        {TABS.map((name) => (
          <Tab key={name} $active={name === tab} onClick={() => setTab(name)}>
            {name}
          </Tab>
        ))}
        <SearchTab>
          <BulbIcon />
          操作说明搜索
        </SearchTab>
        <ShareButton>
          <ShareIcon />
          共享
        </ShareButton>
      </TabRow>

      <RibbonPanel />

      <FormulaBar>
        <Box $name>
          <input aria-label="名称框" defaultValue="E5" />
          <Arrow size={6} />
        </Box>
        <Dots>
          <Icon w={2} h={10}>
            <path d="M1 0v10" stroke="#999" strokeDasharray="2 2" />
          </Icon>
        </Dots>
        <Box $actions>
          <button aria-label="取消">
            <Icon w={11} h={11}>
              <path d="M1 1l9 9M10 1l-9 9" stroke="#b0b0af" strokeWidth="1.400" />
            </Icon>
          </button>
          <button aria-label="输入">
            <Icon w={12} h={11}>
              <path d="M1 6l3.500 3.500L11 1.500" stroke="#999" strokeWidth="2" />
            </Icon>
          </button>
          <button aria-label="插入函数">
            <Fx>fx</Fx>
          </button>
        </Box>
        <Box $formula>
          <input aria-label="编辑栏" />
          <button aria-label="展开编辑栏">
            <Icon w={10} h={7}>
              <path d="M1 1l4 4 4-4" strokeWidth="1.600" />
            </Icon>
          </button>
        </Box>
      </FormulaBar>

      <SheetArea>
        <GridClip>
          <Sheet />
        </GridClip>
        <VScroll>
          <ScrollButton aria-label="向上滚动">
            <Triangle dir="up" />
          </ScrollButton>
          <VThumb />
          <ScrollButton aria-label="向下滚动">
            <Triangle dir="down" />
          </ScrollButton>
          <Meter>
            <div />
          </Meter>
        </VScroll>
      </SheetArea>

      <SheetBar>
        <NavButtons>
          <Triangle dir="left" color="#c6c6c5" />
          <Triangle dir="right" color="#c6c6c5" />
        </NavButtons>
        <SheetTab>Sheet1</SheetTab>
        <AddSheet aria-label="新工作表">
          <Icon w={16} h={16}>
            <circle cx="8" cy="8" r="7" stroke="#7a7a7a" />
            <path d="M8 4v8M4 8h8" stroke="#666" strokeWidth="1.600" />
          </Icon>
        </AddSheet>
        <HScroll>
          <svg viewBox="0 0 20 15" aria-hidden="true">
            <path d="M9 3v10" stroke="#999" strokeDasharray="2 2" />
          </svg>
          <ScrollButton aria-label="向左滚动">
            <Triangle dir="left" />
          </ScrollButton>
          <HThumb />
          <ScrollButton aria-label="向右滚动">
            <Triangle dir="right" />
          </ScrollButton>
        </HScroll>
      </SheetBar>

      <StatusBar>
        <span>就绪</span>
        <ViewButtons>
          <ViewButton $active aria-label="普通">
            <Icon w={13} h={13}>
              <path d="M.5.500h12v12H.5zM.5 4.500h12M.5 8.500h12M4.500.500v12M8.500.500v12" stroke="#9c9c9b" />
            </Icon>
          </ViewButton>
          <ViewButton aria-label="页面布局">
            <Icon w={13} h={13}>
              <path d="M.5 1.500h12v10H.5zM3.500 3.500h6v6h-6zM5 5.500h3M5 7.500h3" stroke="#bdbdbc" />
            </Icon>
          </ViewButton>
          <ViewButton aria-label="分页预览">
            <Icon w={13} h={13}>
              <path d="M.5.500v11h12V.5M4.500.500v7h-4M8.500.500v7h-4" stroke="#bdbdbc" />
            </Icon>
          </ViewButton>
        </ViewButtons>
        <ZoomControl>
          <button aria-label="缩小">-</button>
          <input
            type="range"
            aria-label="缩放"
            min="0"
            max="200"
            value={zoom}
            onChange={(e) => setZoom(Number(e.target.value))}
          />
          <button aria-label="放大">+</button>
          <ZoomText>{zoom}%</ZoomText>
        </ZoomControl>
      </StatusBar>

      <DesktopTaskbar />
    </Window>
  );
}
